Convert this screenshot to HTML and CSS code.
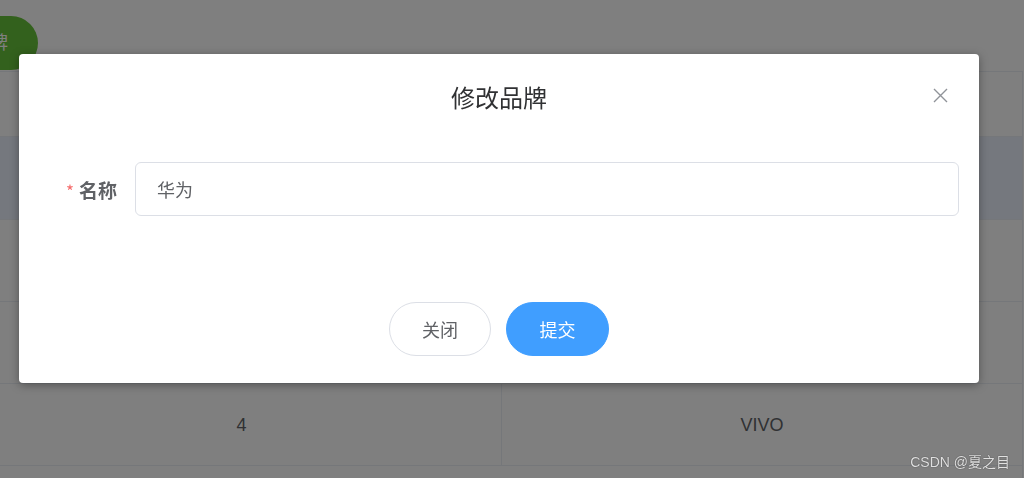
FILE: index.html
```html
<!DOCTYPE html>
<html lang="zh-CN">
<head>
<meta charset="utf-8">
<title>修改品牌</title>
<link rel="stylesheet" href="styles.css">
</head>
<body>
<div class="page">
  <div class="toolbar">
    <button class="btn-add">添加品牌</button>
  </div>
  <div class="table">
    <div class="row head">
      <div class="cell first">序号</div>
      <div class="cell">品牌名称</div>
    </div>
    <div class="row current">
      <div class="cell first">1</div>
      <div class="cell">华为</div>
    </div>
    <div class="row">
      <div class="cell first">2</div>
      <div class="cell">小米</div>
    </div>
    <div class="row">
      <div class="cell first">3</div>
      <div class="cell">OPPO</div>
    </div>
    <div class="row">
      <div class="cell first">4</div>
      <div class="cell">VIVO</div>
    </div>
    <div class="row last">
      <div class="cell first"></div>
      <div class="cell"></div>
    </div>
  </div>
</div>

<div class="overlay"></div>

<div class="dialog">
  <div class="dialog-header">
    <span class="dialog-title">修改品牌</span>
    <button class="dialog-close" aria-label="关闭">
      <svg width="15" height="15" viewBox="0 0 15 15"><path d="M1 1 L14 14 M14 1 L1 14" stroke="#909399" stroke-width="1.4" fill="none"/></svg>
    </button>
  </div>
  <div class="dialog-body">
    <div class="form-item">
      <label class="form-label"><span class="req">*</span>名称</label>
      <div class="input">华为</div>
    </div>
  </div>
  <div class="dialog-footer">
    <button class="btn">关闭</button>
    <button class="btn primary">提交</button>
  </div>
</div>

<div class="watermark">CSDN @夏之目</div>
</body>
</html>
```

FILE: styles.css
```css
* { box-sizing: border-box; }
html, body {
  margin: 0;
  padding: 0;
  width: 1024px;
  height: 478px;
  overflow: hidden;
  background: #ffffff;
  font-family: "Liberation Sans", "Noto Sans CJK SC", sans-serif;
}
button { font-family: inherit; }

.page { width: 1024px; }

.toolbar {
  height: 71px;
  padding-top: 16px;
  display: flex;
}
.btn-add {
  margin-left: -94px;
  width: 132px;
  height: 54px;
  border: none;
  border-radius: 27px;
  background: #67c23a;
  color: #ffffff;
  font-size: 18px;
  line-height: 22px;
  padding: 0 30px;
  white-space: nowrap;
}

.table {
  width: 1023px;
  border-top: 1px solid #ebeef5;
  border-right: 1px solid #ebeef5;
}
.row {
  display: grid;
  grid-template-columns: 502px 520px;
  height: 82px;
  border-bottom: 1px solid #ebeef5;
  color: #606266;
  font-size: 18px;
}
.row.head { height: 65px; color: #909399; font-weight: bold; }
.row.current { background: #eaf1fc; height: 83px; }
.row.last { border-bottom-width: 2px; height: 20px; }
.row.last .cell.first { border-right: none; }
.cell {
  display: flex;
  align-items: center;
  justify-content: center;
  padding-top: 1px;
}
.cell.first {
  border-right: 1px solid #ebeef5;
  padding-right: 18px;
}

.overlay {
  position: fixed;
  inset: 0;
  background: rgba(0, 0, 0, 0.5);
}

.dialog {
  position: absolute;
  left: 19px;
  top: 54px;
  width: 960px;
  height: 329px;
  background: #ffffff;
  border-radius: 4px;
  box-shadow: 0 2px 10px rgba(0, 0, 0, 0.35);
  display: flex;
  flex-direction: column;
  font-family: "Noto Sans CJK SC", "Liberation Sans", sans-serif;
}
.dialog-header {
  position: relative;
  padding: 27px 20px 0;
  text-align: center;
}
.dialog-title {
  font-size: 24px;
  line-height: 32px;
  color: #303133;
}
.dialog-close {
  position: absolute;
  top: 34px;
  right: 31px;
  width: 15px;
  height: 15px;
  padding: 0;
  border: none;
  background: transparent;
  display: flex;
}

.dialog-body {
  padding: 49px 20px 0;
}
.form-item {
  display: flex;
  align-items: center;
}
.form-label {
  width: 96px;
  padding-right: 18px;
  text-align: right;
  font-size: 19px;
  font-weight: bold;
  color: #606266;
}
.req {
  color: #f56c6c;
  font-weight: normal;
  margin-right: 5px;
  font-size: 17px;
}
.input {
  flex: 1;
  height: 54px;
  border: 1px solid #dcdfe6;
  border-radius: 6px;
  padding-left: 21px;
  display: flex;
  align-items: center;
  font-size: 18px;
  color: #606266;
}

.dialog-footer {
  margin-top: auto;
  padding: 0 20px 27px;
  display: flex;
  justify-content: center;
  gap: 15px;
}
.btn {
  height: 54px;
  padding: 0 32px;
  border: 1px solid #dcdfe6;
  border-radius: 27px;
  background: #ffffff;
  color: #606266;
  font-size: 18px;
  font-family: "Noto Sans CJK SC", sans-serif;
}
.btn.primary {
  background: #409eff;
  border-color: #409eff;
  color: #ffffff;
  width: 103px;
}

.watermark {
  position: absolute;
  right: 14px;
  bottom: 8px;
  font-size: 14px;
  line-height: 16px;
  color: rgba(255, 255, 255, 0.85);
  text-shadow: 0 0 1px rgba(0, 0, 0, 0.8);
  font-family: "Liberation Sans", "Noto Sans CJK SC", sans-serif;
}
```
